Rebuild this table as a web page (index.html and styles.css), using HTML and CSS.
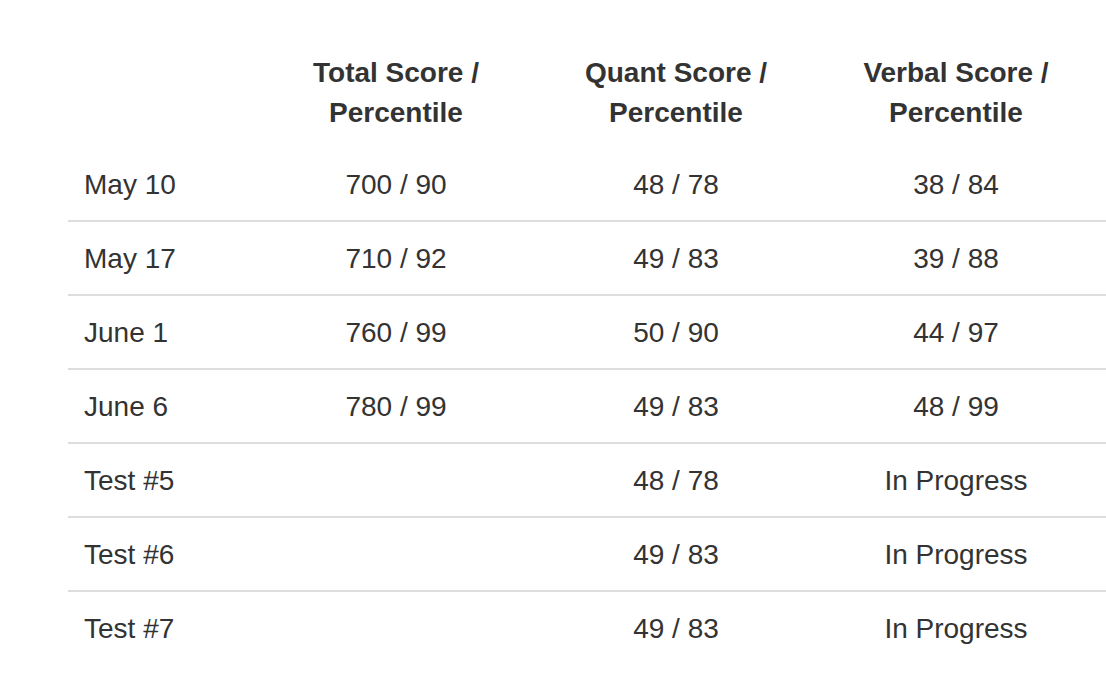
FILE: index.html
```html
<!DOCTYPE html>
<html>
<head>
<meta charset="utf-8">
<link rel="stylesheet" href="styles.css">
</head>
<body>
<table class="scores">
  <colgroup>
    <col class="c-date">
    <col class="c-score">
    <col class="c-score">
    <col class="c-last">
  </colgroup>
  <thead>
    <tr>
      <th></th>
      <th>Total Score /<br>Percentile</th>
      <th>Quant Score /<br>Percentile</th>
      <th>Verbal Score /<br>Percentile</th>
    </tr>
  </thead>
  <tbody>
    <tr><td>May 10</td><td>700 / 90</td><td>48 / 78</td><td>38 / 84</td></tr>
    <tr><td>May 17</td><td>710 / 92</td><td>49 / 83</td><td>39 / 88</td></tr>
    <tr><td>June 1</td><td>760 / 99</td><td>50 / 90</td><td>44 / 97</td></tr>
    <tr><td>June 6</td><td>780 / 99</td><td>49 / 83</td><td>48 / 99</td></tr>
    <tr><td>Test #5</td><td></td><td>48 / 78</td><td>In Progress</td></tr>
    <tr><td>Test #6</td><td></td><td>49 / 83</td><td>In Progress</td></tr>
    <tr><td>Test #7</td><td></td><td>49 / 83</td><td>In Progress</td></tr>
  </tbody>
</table>
</body>
</html>
```

FILE: styles.css
```css
html, body {
  margin: 0;
  padding: 0;
  background: #fff;
  overflow: hidden;
}
body {
  font-family: Arial, "Liberation Sans", Helvetica, sans-serif;
  font-size: 28px;
  line-height: 40px;
  color: #333;
}
.scores {
  margin: 36px 0 0 68px;
  width: 1038px;
  table-layout: fixed;
  border-collapse: collapse;
  border-spacing: 0;
  font-family: Arial, "Liberation Sans", Helvetica, sans-serif;
}
.c-date { width: 188px; }
.c-score { width: 280px; }
.c-last { width: 290px; }
.scores th,
.scores td {
  padding: 17px 16px 15px;
  text-align: center;
  vertical-align: top;
}
.scores th {
  font-weight: bold;
  vertical-align: bottom;
}
.scores th:last-child,
.scores td:last-child {
  padding-right: 26px;
}
.scores td:first-child {
  text-align: left;
}
.scores tbody tr + tr td {
  border-top: 2px solid #ddd;
}
```
